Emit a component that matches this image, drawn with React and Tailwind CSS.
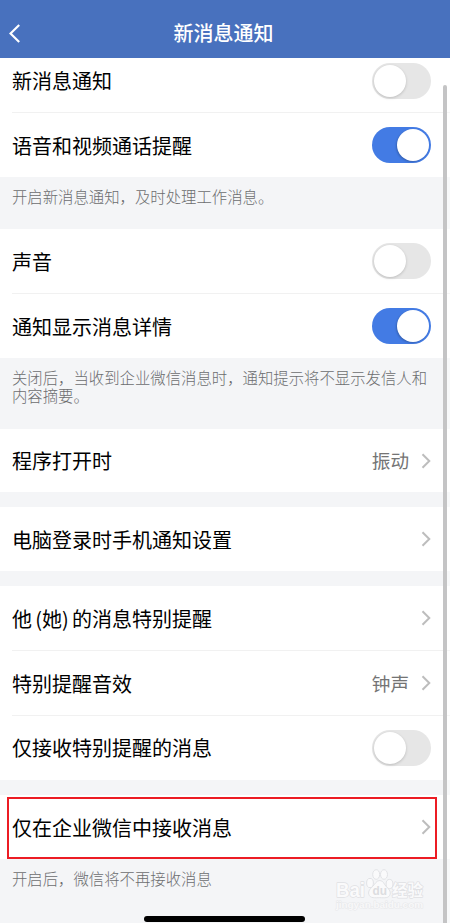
function Toggle({ on }) {
  return (
    <span
      className={`flex h-9 w-[59px] shrink-0 items-center rounded-full px-0.5 ${
        on ? "justify-end bg-[#437be4]" : "justify-start bg-[#e6e6e6]"
      }`}
    >
      <span
        className={`size-8 rounded-full bg-white ${
          on ? "shadow-[-1px_1px_2px_rgba(0,0,0,0.2)]" : "shadow-[0_1px_3px_rgba(0,0,0,0.18)]"
        }`}
      />
    </span>
  );
}

function Chevron() {
  return (
    <svg className="h-4 w-[10px] shrink-0" viewBox="0 0 10 16" fill="none" stroke="#bdbdbd" strokeWidth="2">
      <path d="M1.5 1.2 8.3 8l-6.8 6.8" />
    </svg>
  );
}

function Row({ label, line, value, toggle, className = "h-16", textClass = "pt-0.5" }) {
  return (
    <div className="w-full bg-white">
      <div className={`flex items-center justify-between pr-[19px] pl-3 ${className}`}>
        <span className={`text-[20px] leading-6 whitespace-nowrap text-black ${textClass}`}>{label}</span>
        {toggle ? (
          <Toggle on={toggle === "on"} />
        ) : (
          <span className="flex items-center gap-3">
            {value && <span className="pb-px text-[18.6px] leading-[22px] text-[#747474]">{value}</span>}
            <Chevron />
          </span>
        )}
      </div>
      {line && <div className="ml-3 h-px bg-[#f1f1f1]" />}
    </div>
  );
}

function Note({ children, className }) {
  return (
    <p
      className={`pt-3 pl-3 font-['Liberation_Sans','Noto_Sans_CJK_SC',sans-serif] text-[15.38px] leading-[18px] font-light whitespace-nowrap text-[#6c6d6f] ${className}`}
    >
      {children}
    </p>
  );
}

function Watermark() {
  return (
    <svg
      className="absolute top-[867px] left-[334px] h-[46px] w-[94px]"
      viewBox="0 0 94 46"
      fill="#fafafb"
      stroke="#dfe0e3"
      strokeWidth="1.4"
      strokeLinejoin="round"
      fontFamily="'Liberation Sans', 'Noto Sans CJK SC', sans-serif"
    >
      <g style={{ paintOrder: "stroke" }}>
        <text x="2" y="29.5" fontSize="20" fontWeight="bold" textLength="29" lengthAdjust="spacingAndGlyphs">Bai</text>
        <text x="58" y="29" fontSize="15.5" fontWeight="bold">经验</text>
        <text x="2" y="41" fontSize="9.5" fontWeight="bold" textLength="87" lengthAdjust="spacingAndGlyphs" fill="#f8f8f9" stroke="#e8e9eb" strokeWidth="1.1">jingyan.baidu.com</text>
      </g>
      <g strokeWidth="0.9">
        <ellipse cx="36" cy="16" rx="3.4" ry="4.6" />
        <ellipse cx="42.2" cy="7.5" rx="3.5" ry="4.8" />
        <ellipse cx="50" cy="7.5" rx="3.5" ry="4.8" />
        <ellipse cx="55.5" cy="17" rx="3.4" ry="4.6" />
        <path d="M45.8 13.5c-3.5 0-4.8 3.7-7 5.8-2.6 2.5-4.8 4.6-4 7.9 1.1 4.5 6.6 3.5 11 3.5s9.3 1 10.3-3.5c.8-3.3-1.7-5.4-4.1-7.9-2-2.1-2.7-5.8-6.2-5.8Z" />
      </g>
      <text x="38.5" y="28" fontSize="13" fontWeight="bold" textLength="14.5" lengthAdjust="spacingAndGlyphs" fill="#dcdde0" stroke="none">du</text>
    </svg>
  );
}

export default function App() {
  return (
    <div className="h-[923px] w-[453px] overflow-hidden bg-white font-['Noto_Sans_CJK_SC',sans-serif]">
      <main className="relative flex h-full w-[450px] flex-col bg-[#f4f5f7]">
        <header className="flex h-[58px] shrink-0 items-center bg-[#4871be] pl-[9px]">
          <svg className="mt-[9px] h-[19px] w-[11px]" viewBox="0 0 11 19" fill="none" stroke="white" strokeWidth="2.2">
            <path d="M10.2 1 1.5 9.5l8.7 8.5" />
          </svg>
          <h1 className="flex-1 pt-2 pr-[23px] text-center text-[20px] leading-6 font-medium text-white">新消息通知</h1>
        </header>

        <Row label="新消息通知" toggle="off" line className="h-[54px] pb-2" textClass="pt-0" />
        <Row label="语音和视频通话提醒" toggle="on" />
        <Note className="h-[52px]">开启新消息通知，及时处理工作消息。</Note>

        <Row label="声音" toggle="off" line />
        <Row label="通知显示消息详情" toggle="on" />
        <Note className="h-[71px]">
          关闭后，当收到企业微信消息时，通知提示将不显示发信人和
          <br />
          内容摘要。
        </Note>

        <Row label="程序打开时" value="振动" className="h-[63px]" textClass="pt-0" />
        <div className="h-[15px] shrink-0" />
        <Row label="电脑登录时手机通知设置" />
        <div className="h-[15px] shrink-0" />
        <Row
          line
          label={
            <>
              他<span className="inline-block w-2.5 text-right">(</span>她
              <span className="inline-block w-2.5">)</span>的消息特别提醒
            </>
          }
        />
        <Row label="特别提醒音效" value="钟声" line />
        <Row label="仅接收特别提醒的消息" toggle="off" textClass="pt-0" />
        <div className="h-[15px] shrink-0" />
        <Row label="仅在企业微信中接收消息" />
        <Note>开启后，微信将不再接收消息</Note>

        <div className="absolute inset-y-0 top-[58px] right-0 w-1 bg-white/40" />
        <div className="absolute top-[797px] left-[7px] h-[62px] w-[430px] border-2 border-[#ec1c24]" />
        <div className="absolute top-[85px] bottom-0 left-[443px] w-[3.5px] rounded-t-full bg-[#c4c4c5]" />
        <div className="absolute top-[916px] left-36 h-[6px] w-[161px] rounded-full bg-black" />
        <Watermark />
      </main>
    </div>
  );
}
